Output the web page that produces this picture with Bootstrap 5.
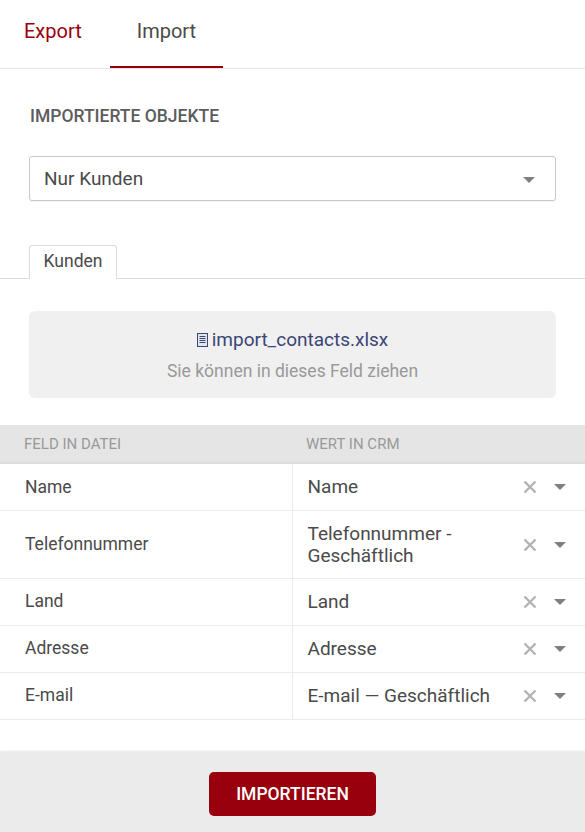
<!DOCTYPE html>
<html lang="de">
<head>
<meta charset="utf-8">
<title>Import</title>
<link rel="stylesheet" href="https://cdn.jsdelivr.net/npm/bootstrap@5.3.0/dist/css/bootstrap.min.css">
<style>
html,body{height:832px;overflow:hidden}
body{font-family:Roboto,"Liberation Sans",sans-serif;color:#4a4a4a;background:#fff;font-size:19px}
.top-tabs{height:69px;border-bottom:1px solid #e6e6e6}
.top-tabs a{display:block;height:68px;line-height:63px;font-size:20px;text-decoration:none}
.tab-exp{color:#99000d;padding:0 28px 0 24px}
.tab-imp{color:#4a4a4a;padding:0 27px;border-bottom:2px solid #99000d}
.sec-title{margin:37px 0 0 30px;height:20px;line-height:20px;font-size:17.5px;font-weight:500;color:#5c5c5c}
.sel-box{margin:30px 29px 0;height:45px;border:1px solid #c9c9c9;border-radius:3px;padding:2px 20px 0 14px;font-size:19px;box-shadow:0 1px 1px rgba(0,0,0,.05)}
.caret-shape{width:0;height:0;border-left:6.5px solid transparent;border-right:6.5px solid transparent;border-top:6.5px solid #7f7f7f;flex:none}
.sub-tabs{margin-top:44px;height:34px;border-bottom:1px solid #dcdcdc;padding-left:29px}
.sub-tab{height:34px;width:88px;border:1px solid #dcdcdc;border-bottom:0;border-radius:3px 3px 0 0;background:#fff;font-size:17.5px;text-align:center;line-height:30px;margin-bottom:-1px;position:relative}
.drop-zone{margin:32px 29px 0;height:87px;background:#f0f0f0;border-radius:6px;text-align:center;padding-top:15px}
.file-line{color:#3b4576;font-size:19px;line-height:27px}
.file-line svg{vertical-align:-1px;margin-right:4px}
.hint-line{color:#999;font-size:17.5px;line-height:24px;margin-top:6px}
.map-head{margin-top:27px;height:39px;background:#e5e5e5;border-bottom:2px solid #dcdcdc;font-size:15px;color:#999}
.map-head>div:first-child{width:293px;padding-left:24px;line-height:38px}
.map-head>div:last-child{padding-left:13px;line-height:38px}
.map-row{border-bottom:1px solid #ebebeb}
.r47{height:47px}.r68{height:68px}
.cell-a{width:293px;padding-left:25px;border-right:1px solid #ebebeb;font-size:17.5px}
.cell-a.lift{padding-bottom:2px}
.cell-b{width:292px;padding:0 19px 0 14.5px;font-size:19px;line-height:22px}
.cell-b .val{flex:1}
.x-icon{flex:none;margin-right:17px}
.bottom-bar{position:fixed;left:0;right:0;top:752px;height:80px;background:#ebebeb;box-shadow:0 -1px 2px rgba(0,0,0,.1);padding-top:20px}
.btn-imp{width:167px;height:44px;background:#99000d;border:0;border-radius:5px;color:#fff;font-size:17.5px;font-weight:500;padding:0}
.btn-imp:hover{background:#99000d;color:#fff}
</style>
</head>
<body>
<nav class="top-tabs d-flex">
  <a class="tab-exp" href="#">Export</a>
  <a class="tab-imp" href="#">Import</a>
</nav>
<div class="sec-title">IMPORTIERTE OBJEKTE</div>
<div class="sel-box d-flex align-items-center justify-content-between"><span>Nur Kunden</span><span class="caret-shape"></span></div>
<div class="sub-tabs d-flex"><div class="sub-tab">Kunden</div></div>
<div class="drop-zone">
  <div class="file-line"><svg width="11" height="14" viewBox="0 0 11 14"><rect x=".5" y=".5" width="10" height="13" fill="#e4e6ee" stroke="#3b4576"/><path d="M2.5 3.5h6M2.5 5.5h6M2.5 7.5h6M2.5 9.5h6" stroke="#3b4576" fill="none"/></svg>import_contacts.xlsx</div>
  <div class="hint-line">Sie können in dieses Feld ziehen</div>
</div>
<div class="map-head d-flex"><div>FELD IN DATEI</div><div>WERT IN CRM</div></div>
<div class="map-row r47 d-flex"><div class="cell-a d-flex align-items-center">Name</div><div class="cell-b d-flex align-items-center"><span class="val">Name</span><svg class="x-icon" width="14" height="14" viewBox="0 0 14 14"><path d="M1.5 1.5l11 11M12.5 1.5l-11 11" stroke="#b3b3b3" stroke-width="2.4"/></svg><span class="caret-shape"></span></div></div>
<div class="map-row r68 d-flex"><div class="cell-a d-flex align-items-center">Telefonnummer</div><div class="cell-b d-flex align-items-center"><span class="val">Telefonnummer -<br>Geschäftlich</span><svg class="x-icon" width="14" height="14" viewBox="0 0 14 14"><path d="M1.5 1.5l11 11M12.5 1.5l-11 11" stroke="#b3b3b3" stroke-width="2.4"/></svg><span class="caret-shape"></span></div></div>
<div class="map-row r47 d-flex"><div class="cell-a lift d-flex align-items-center">Land</div><div class="cell-b d-flex align-items-center"><span class="val">Land</span><svg class="x-icon" width="14" height="14" viewBox="0 0 14 14"><path d="M1.5 1.5l11 11M12.5 1.5l-11 11" stroke="#b3b3b3" stroke-width="2.4"/></svg><span class="caret-shape"></span></div></div>
<div class="map-row r47 d-flex"><div class="cell-a lift d-flex align-items-center">Adresse</div><div class="cell-b d-flex align-items-center"><span class="val">Adresse</span><svg class="x-icon" width="14" height="14" viewBox="0 0 14 14"><path d="M1.5 1.5l11 11M12.5 1.5l-11 11" stroke="#b3b3b3" stroke-width="2.4"/></svg><span class="caret-shape"></span></div></div>
<div class="map-row r47 d-flex"><div class="cell-a lift d-flex align-items-center">E-mail</div><div class="cell-b d-flex align-items-center"><span class="val">E-mail — Geschäftlich</span><svg class="x-icon" width="14" height="14" viewBox="0 0 14 14"><path d="M1.5 1.5l11 11M12.5 1.5l-11 11" stroke="#b3b3b3" stroke-width="2.4"/></svg><span class="caret-shape"></span></div></div>
<div class="bottom-bar text-center"><button type="button" class="btn btn-imp">IMPORTIEREN</button></div>
<script src="https://cdn.jsdelivr.net/npm/bootstrap@5.3.0/dist/js/bootstrap.bundle.min.js"></script>
</body>
</html>
